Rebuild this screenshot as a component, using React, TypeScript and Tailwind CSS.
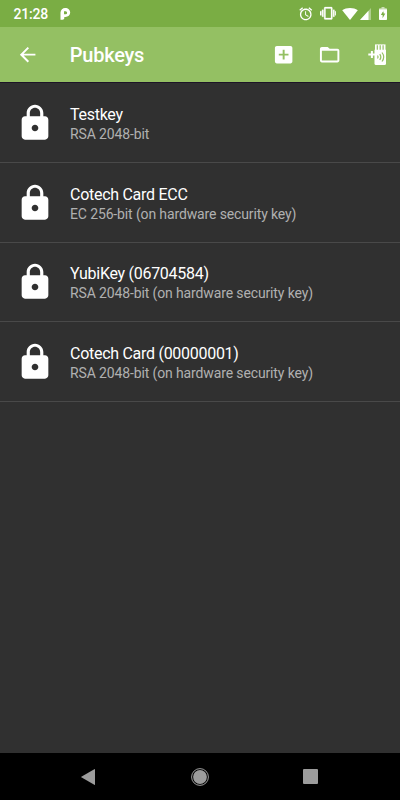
import type { ReactNode } from "react"

type Pubkey = {
  name: string
  description: string
}

const pubkeys: Pubkey[] = [
  { name: "Testkey", description: "RSA 2048-bit" },
  {
    name: "Cotech Card ECC",
    description: "EC 256-bit (on hardware security key)",
  },
  {
    name: "YubiKey (06704584)",
    description: "RSA 2048-bit (on hardware security key)",
  },
  {
    name: "Cotech Card (00000001)",
    description: "RSA 2048-bit (on hardware security key)",
  },
]

function Icon({
  className,
  viewBox = "0 0 24 24",
  children,
}: {
  className: string
  viewBox?: string
  children: ReactNode
}) {
  return (
    <svg
      className={`shrink-0 ${className}`}
      viewBox={viewBox}
      fill="currentColor"
      aria-hidden="true"
    >
      {children}
    </svg>
  )
}

function StatusBar() {
  return (
    <div className="flex h-[27px] shrink-0 items-center bg-[#7aad44] pr-[13.5px] pl-[13.5px] text-white">
      <span className="w-[35px] pt-px text-[14px] leading-[26px] font-medium tracking-[-0.2px]">
        21:28
      </span>
      <Icon className="mt-px ml-[11.500px] h-3 w-[11px]" viewBox="0 0 11 12">
        <path
          fillRule="evenodd"
          d="M.5 4.500A4.700 4.700 0 0 1 5.300 0C8 0 10.200 1.900 10.200 4.600S8 9 5.500 9H4.300v1.100c0 1-.7 1.700-1.700 1.700H.5zM4 3.200v3h1.600a1.500 1.500 0 0 0 0-3z"
        />
      </Icon>
      <Icon className="ml-auto size-[15.500px]">
        <path d="M22 5.720l-4.600-3.860-1.290 1.530 4.600 3.860L22 5.720zM7.880 3.390L6.600 1.860 2 5.710l1.290 1.530 4.590-3.850zM12.500 8H11v6l4.750 2.850.75-1.230-4-2.370V8zM12 4c-4.970 0-9 4.030-9 9s4.020 9 9 9c4.970 0 9-4.030 9-9s-4.030-9-9-9zm0 16c-3.870 0-7-3.130-7-7s3.130-7 7-7 7 3.130 7 7-3.130 7-7 7z" />
      </Icon>
      <Icon className="ml-[6.500px] size-[16.500px]">
        <path
          d="M0 15h2V9H0v6zm3 2h2V7H3v10zm19-8v6h2V9h-2zm-3 8h2V7h-2v10zM16.500 3h-9C6.670 3 6 3.670 6 4.500v15c0 .83.67 1.500 1.500 1.500h9c.83 0 1.500-.67 1.500-1.500v-15c0-.83-.67-1.500-1.500-1.500zM16 19H8V5h8v14z"
          stroke="currentColor"
          strokeWidth=".4"
        />
      </Icon>
      <Icon className="ml-[6px] h-3 w-4" viewBox="0 0 16 12">
        <path d="M8 12 .2 2.300C2.400.8 5 0 8 0s5.600.8 7.800 2.300z" />
      </Icon>
      <Icon className="ml-[2px] h-3 w-[11px]" viewBox="0 0 11 12">
        <path d="M0 12 11 0v12z" opacity=".4" />
        <path d="M0 12 8.500 2.730V12z" />
      </Icon>
      <Icon className="ml-[7.500px] h-[13px] w-2" viewBox="0 0 8 13">
        <path
          d="M2.500 0h3v1.300h1.700q.8 0 .8.800V5H0V2.100q0-.8.8-.8h1.700z"
          opacity=".6"
        />
        <path
          fillRule="evenodd"
          d="M0 2.500h8v9.700q0 .8-.8.800H.8q-.8 0-.8-.8zM4.600 3.300 1.900 7.900h1.700v3.400l2.700-4.700H4.600z"
        />
      </Icon>
    </div>
  )
}

function AppBar() {
  return (
    <header className="flex h-[55px] shrink-0 items-center bg-[#94c063] pr-[13px] pl-[15.500px] text-white">
      <button className="flex" aria-label="Back">
        <Icon className="size-[23.300px]">
          <path d="M20 11H7.830l5.590-5.590L12 4l-8 8 8 8 1.410-1.410L7.830 13H20v-2z" />
        </Icon>
      </button>
      <h1 className="ml-[31px] pt-px text-[20px] leading-6 font-medium tracking-[-0.25px]">
        Pubkeys
      </h1>
      <button className="ml-auto flex" aria-label="Add">
        <Icon className="size-[23.300px]">
          <path d="M19 3H5c-1.110 0-2 .9-2 2v14c0 1.100.89 2 2 2h14c1.100 0 2-.9 2-2V5c0-1.100-.9-2-2-2zm-2 10h-4v4h-2v-4H7v-2h4V7h2v4h4v2z" />
        </Icon>
      </button>
      <button className="ml-[23.300px] flex" aria-label="Import">
        <Icon className="size-[23.300px]">
          <path d="M20 6h-8l-2-2H4c-1.100 0-1.990.9-1.990 2L2 18c0 1.100.9 2 2 2h16c1.100 0 2-.9 2-2V8c0-1.100-.9-2-2-2zm0 12H4V8h16v10z" />
        </Icon>
      </button>
      <button className="ml-[25.500px] flex" aria-label="Add security key">
        <Icon className="h-[22px] w-5" viewBox="0 0 20 22">
          <path d="M8 .4h10.500v6H8z" />
          <path d="M7.500 5.800H19v13.700q0 1.500-1.500 1.500H9q-1.500 0-1.500-1.500z" />
          <path
            d="M10.300 1.200v4.500M13.200 1.200v4.500M16.100 1.200v4.500"
            stroke="#94c063"
            strokeWidth="1.200"
          />
          <path d="M1.300 9.500h2.600V7h2v2.500h3v1.900h-3V14h-2v-2.600H1.300z" />
          <path
            d="M10.500 11.500q1.200 1.500 0 3M12.800 10q2.100 3 0 6M15 8.500q3.400 4.500 0 9"
            fill="none"
            stroke="#94c063"
            strokeWidth="1.200"
          />
        </Icon>
      </button>
    </header>
  )
}

function PubkeyRow({ name, description }: Pubkey) {
  return (
    <li className="flex h-[79.500px] items-center border-b border-[#494949] pl-[15px]">
      <Icon className="mt-[0.500px] size-10 text-white">
        <path d="M18 8h-1V6c0-2.760-2.240-5-5-5S7 3.240 7 6v2H6c-1.100 0-2 .9-2 2v10c0 1.100.9 2 2 2h12c1.100 0 2-.9 2-2V10c0-1.100-.9-2-2-2zm-6 9c-1.100 0-2-.9-2-2s.9-2 2-2 2 .9 2 2-.9 2-2 2zm3.100-9H8.900V6c0-1.710 1.390-3.100 3.100-3.100 1.710 0 3.100 1.390 3.100 3.100v2z" />
      </Icon>
      <div className="ml-[15px] flex flex-col pt-[4px]">
        <span className="text-[16px] leading-5 tracking-[-0.28px] text-white">
          {name}
        </span>
        <span className="text-[14px] leading-[19px] tracking-[-0.13px] text-[#b0b0b0]">
          {description}
        </span>
      </div>
    </li>
  )
}

function NavigationBar() {
  return (
    <nav className="flex h-[47px] shrink-0 items-center justify-between bg-black pr-[82px] pl-[81px] text-[#9c9c9c]">
      <Icon className="h-4 w-[14px]" viewBox="0 0 14 16">
        <path d="M13.300.2q.7-.4.700.4v14.800q0 .8-.7.4L.3 8.300q-.5-.3 0-.6z" />
      </Icon>
      <Icon className="ml-[1.500px] size-[18px]" viewBox="0 0 18 18">
        <circle
          cx="9"
          cy="9"
          r="8.400"
          fill="none"
          stroke="currentColor"
          strokeWidth="1"
        />
        <circle cx="9" cy="9" r="6.900" />
      </Icon>
      <Icon className="size-[15px]" viewBox="0 0 15 15">
        <rect width="15" height="15" rx="1" />
      </Icon>
    </nav>
  )
}

export default function App() {
  return (
    <div className="flex h-[800px] w-[400px] flex-col overflow-hidden bg-[#303030] font-['Roboto',sans-serif]">
      <StatusBar />
      <AppBar />
      <main className="grow border-t border-[#1d1527] pt-[0.600px]">
        <ul>
          {pubkeys.map((pubkey) => (
            <PubkeyRow key={pubkey.name} {...pubkey} />
          ))}
        </ul>
      </main>
      <NavigationBar />
    </div>
  )
}
